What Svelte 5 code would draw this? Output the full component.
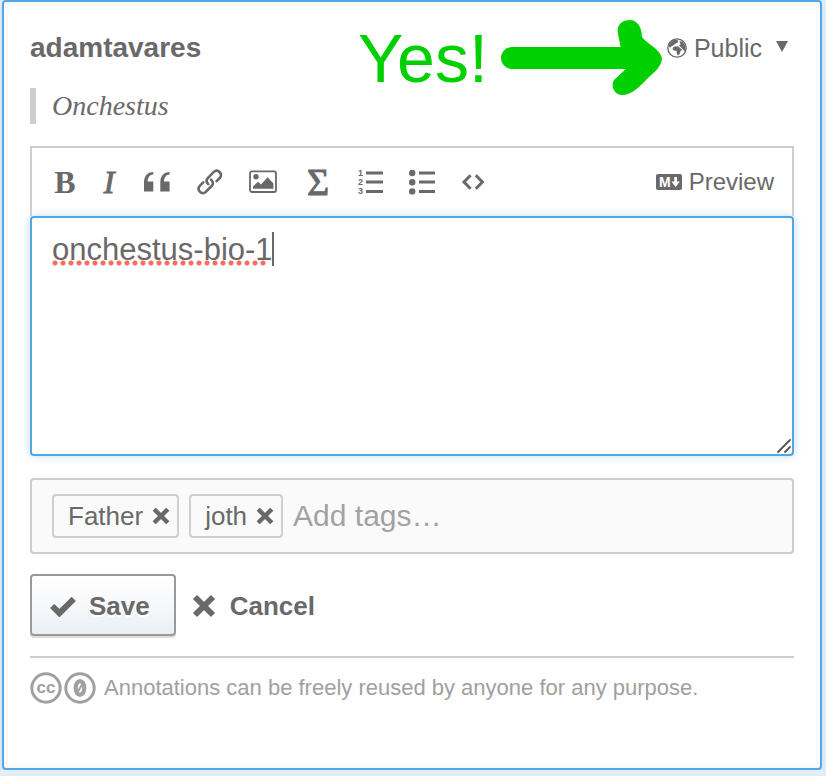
<script>
  let body = $state('onchestus-bio-1');
  let tags = $state(['Father', 'joth']);
  let draft = $state('');

  function removeTag(name) {
    tags = tags.filter((t) => t !== name);
  }
</script>

<main class="card">
  <header class="head">
    <strong class="user">adamtavares</strong>
    <button class="plain privacy" type="button">
      <svg width="20" height="20" viewBox="0 0 20 20" aria-hidden="true">
        <circle cx="10" cy="10" r="9.2" fill="none" stroke="currentColor" stroke-width="1.3" />
        <path d="M2 6.6 4.4 3.2 8 1.6 11.4 2.4 10.6 4.4 8.6 5.4 6.6 7.2 4.8 8 3.4 9.4 2 9Z" fill="currentColor" />
        <path d="M6 9.4 8.4 8.2 11.4 8.6 13.6 10.6 15 11.4 13.4 13.6 12.4 16.4 10.8 17.6 9.8 15.4 9.6 13 7 12.6 5.6 11.2Z" fill="currentColor" />
        <path d="M12.2 3.2 15.6 3.8 18.2 7.6 18.6 11 17.4 13.4 16 11.2 14.2 9.4 12 7.6 13.6 6.2Z" fill="currentColor" />
      </svg>
      <span>Public</span>
      <svg class="caret" width="12" height="12" viewBox="0 0 12 12" aria-hidden="true"><path d="M0 0H12L6 11Z" fill="currentColor" /></svg>
    </button>
  </header>

  <blockquote class="quote">Onchestus</blockquote>

  <section class="editor">
    <div class="toolbar">
      <button class="plain letter bold" type="button" aria-label="Bold">B</button>
      <button class="plain letter italic" type="button" aria-label="Italic">I</button>
      <button class="plain" type="button" aria-label="Quote">
        <svg width="28" height="26" viewBox="0 0 28 26" fill="currentColor">
          <path d="M10.3 3V5.6C7 5.8 5 8 4.6 12.4H10.3V22.4H1V14C1 7 4.2 3.2 10.3 3Z" />
          <path d="M26.6 3V5.6C23.3 5.8 21.3 8 20.9 12.4H26.6V22.4H17.3V14C17.3 7 20.5 3.2 26.6 3Z" />
        </svg>
      </button>
      <button class="plain" type="button" aria-label="Link">
        <svg width="26" height="26" viewBox="0 0 26 26" fill="none" stroke="currentColor" stroke-width="2.6" stroke-linecap="round" stroke-linejoin="round">
          <path d="M11.2 15.2C9 13 9.2 10.6 11 8.8L16.6 3.2C18.4 1.4 20.8 1.2 22.6 3S24.4 7.4 22.8 9L19.6 12.2" />
          <path d="M14 10.6C16.4 12.8 16.4 15.2 14.6 17L8.8 22.8C7 24.6 4.8 24.6 3 22.8S1.2 18.6 2.8 16.8L6.2 13.4" />
        </svg>
      </button>
      <button class="plain" type="button" aria-label="Image">
        <svg width="30" height="26" viewBox="0 0 30 26" fill="currentColor">
          <rect x="1" y="2.4" width="26" height="20.6" rx="2" fill="none" stroke="currentColor" stroke-width="1.8" />
          <circle cx="7" cy="7.8" r="2.7" />
          <path d="M4 19.8V17.4L9 12.8 12 15.4 18.6 8.2 24.4 14.4V19.8Z" />
        </svg>
      </button>
      <button class="plain letter sum" type="button" aria-label="Math">Σ</button>
      <button class="plain" type="button" aria-label="Numbered list">
        <svg width="26" height="26" viewBox="0 0 26 26" fill="currentColor">
          <text x="1" y="7" class="num">1</text>
          <text x="1" y="16" class="num">2</text>
          <text x="1" y="25" class="num">3</text>
          <path d="M9 2.4H26V5.4H9ZM9 11.6H26V14.6H9ZM9 21H26V24H9Z" />
        </svg>
      </button>
      <button class="plain" type="button" aria-label="Bulleted list">
        <svg width="26" height="26" viewBox="0 0 26 26" fill="currentColor">
          <circle cx="3.2" cy="4" r="3.2" /><circle cx="3.2" cy="13.2" r="3.2" /><circle cx="3.2" cy="22.4" r="3.2" />
          <path d="M10 2.4H26V5.4H10ZM10 11.6H26V14.6H10ZM10 21H26V24H10Z" />
        </svg>
      </button>
      <button class="plain" type="button" aria-label="Code">
        <svg width="24" height="26" viewBox="0 0 24 26" fill="none" stroke="currentColor" stroke-width="3">
          <path d="M9.6 6.2 3 13 9.6 19.8M14.8 6.2 21.4 13 14.8 19.8" />
        </svg>
      </button>
      <button class="plain preview" type="button">
        <svg width="26" height="16" viewBox="0 0 26 16" aria-hidden="true">
          <rect width="26" height="16" rx="2" fill="currentColor" />
          <text x="3" y="13" class="md">M</text>
          <path d="M18.2 3H21V7.6H23.8L19.6 13 15.4 7.6H18.2Z" fill="#fff" />
        </svg>
        <span>Preview</span>
      </button>
    </div>
    <div class="field">
      <textarea aria-label="Annotation" spellcheck="false" bind:value={body}></textarea>
      <span class="misspelt" aria-hidden="true"></span>
      <span class="cursor" aria-hidden="true"></span>
      <svg class="grip" width="14" height="14" viewBox="0 0 14 14" stroke="#555" stroke-width="1.8" stroke-linecap="round" aria-hidden="true">
        <path d="M1 13 13 1M8 13 13 8" />
      </svg>
    </div>
  </section>

  <section class="tags">
    {#each tags as tag (tag)}
      <span class="tag">
        {tag}
        <button class="plain" type="button" aria-label="Remove {tag}" onclick={() => removeTag(tag)}>
          <svg width="18" height="18" viewBox="0 0 18 18" stroke="currentColor" stroke-width="4.4"><path d="M2.2 2.2 15.8 15.8M15.8 2.2 2.2 15.8" /></svg>
        </button>
      </span>
    {/each}
    <input type="text" aria-label="Add tags" placeholder="Add tags…" bind:value={draft} />
  </section>

  <div class="actions">
    <button class="save" type="button">
      <svg width="26" height="22" viewBox="0 0 26 22" aria-hidden="true"><path d="M2.2 11 9.4 18.2 23.8 3.8" fill="none" stroke="currentColor" stroke-width="6" /></svg>
      <span>Save</span>
    </button>
    <button class="plain cancel" type="button">
      <svg width="24" height="24" viewBox="0 0 24 24" stroke="currentColor" stroke-width="6" aria-hidden="true"><path d="M3 3 21 21M21 3 3 21" /></svg>
      <span>Cancel</span>
    </button>
  </div>

  <footer class="license">
    <svg width="66" height="32" viewBox="0 0 66 32" aria-hidden="true">
      <g fill="none" stroke="currentColor" stroke-width="3">
        <circle cx="16" cy="16" r="14.2" />
        <circle cx="50" cy="16" r="14.2" />
      </g>
      <text x="16" y="21" class="cc">cc</text>
      <ellipse cx="50" cy="16" rx="4.3" ry="6.8" fill="none" stroke="currentColor" stroke-width="4.2" />
      <path d="M47.4 20.5 52.6 11.5" stroke="currentColor" stroke-width="2" />
    </svg>
    <span>Annotations can be freely reused by anyone for any purpose.</span>
  </footer>

  <span class="shout">Yes!</span>
  <svg class="arrow" width="168" height="84" viewBox="0 0 168 84" aria-hidden="true">
    <path d="M15 42H130" stroke="#00d000" stroke-width="22" stroke-linecap="round" />
    <path d="M121 18C119 8 126 4 133 4S145 11 145 21C150 28 164 33 165 43C164 52 155 58 150 63C143 70 136 78 127 79C118 80 113 71 117 64L130 52 124 33Z" fill="#00d000" />
  </svg>
</main>

<style>
  :global(body) {
    background: #e3eef8;
  }
  .card {
    position: relative;
    box-sizing: border-box;
    margin: 0 4px 0 2px;
    padding: 26px 26px 64px;
    border: 2px solid #51a7e8;
    border-radius: 4px;
    background: #fff;
    box-shadow: inset 0 0 0 4px #fafafa, 0 2px 6px #c8dcee;
    color: #696969;
    font-family: "Liberation Sans", Arial, sans-serif;
    font-size: 26px;
  }
  button,
  input,
  textarea {
    font: inherit;
    color: inherit;
  }
  svg {
    display: block;
    flex: none;
  }
  .plain {
    display: flex;
    align-items: center;
    padding: 0;
    border: 0;
    background: none;
  }
  .head {
    display: flex;
    align-items: center;
    justify-content: space-between;
    height: 40px;
  }
  .user {
    font-size: 28px;
  }
  .privacy {
    gap: 7px;
    padding-right: 6px;
    font-size: 25px;
  }
  .caret {
    margin: 0 0 3px 7px;
  }
  .quote {
    margin: 20px 0 22px;
    padding-left: 16px;
    border-left: 6px solid #cecece;
    font: italic 28px/36px "Liberation Serif", Georgia, serif;
  }
  .toolbar {
    display: flex;
    align-items: center;
    gap: 26px;
    height: 68px;
    padding: 0 18px 0 23px;
    border: 2px solid #cecece;
    border-bottom: 0;
    box-sizing: border-box;
    height: 70px;
  }
  .letter {
    justify-content: center;
    width: 20px;
    font: bold 32px/32px "Liberation Serif", serif;
  }
  .italic {
    width: 16px;
    font-style: italic;
    font-weight: normal;
    -webkit-text-stroke: 1px currentColor;
  }
  .sum {
    width: 26px;
    font-size: 38px;
    font-weight: normal;
    -webkit-text-stroke: 1px currentColor;
  }
  .num {
    font: bold 9px "Liberation Sans", sans-serif;
  }
  .md {
    font: bold 14px "Liberation Sans", sans-serif;
    fill: #fff;
  }
  .preview {
    gap: 7px;
    margin-left: auto;
    font-size: 24px;
  }
  .field {
    position: relative;
  }
  textarea {
    display: block;
    box-sizing: border-box;
    width: 100%;
    height: 240px;
    padding: 14px 20px;
    border: 2px solid #51a7e8;
    border-radius: 4px;
    outline: 0;
    background: #fff;
    box-shadow: 0 0 10px #c4dcf0;
    font-size: 31px;
    line-height: 36px;
    resize: none;
  }
  .misspelt {
    position: absolute;
    left: 22px;
    top: 44px;
    width: 216px;
    height: 6px;
    background: radial-gradient(circle at 3px 3px, #ff6a5c 2px, transparent 3px) 0 0 / 8px 6px;
  }
  .cursor {
    position: absolute;
    left: 242px;
    top: 16px;
    width: 2px;
    height: 34px;
    background: #696969;
  }
  .grip {
    position: absolute;
    right: 3px;
    bottom: 3px;
  }
  .tags {
    display: flex;
    align-items: center;
    box-sizing: border-box;
    gap: 10px;
    height: 76px;
    margin-top: 22px;
    padding: 0 20px;
    border: 2px solid #cecece;
    border-radius: 4px;
    background: #fafafa;
  }
  .tag {
    display: flex;
    align-items: center;
    gap: 9px;
    height: 40px;
    padding: 0 7px 0 14px;
    border: 2px solid #cecece;
    border-radius: 4px;
  }
  .tags input {
    flex: 1;
    min-width: 0;
    padding: 0;
    border: 0;
    outline: 0;
    background: none;
    font-size: 30px;
  }
  .tags input::placeholder {
    color: #a2a2a2;
    opacity: 1;
  }
  .actions {
    display: flex;
    align-items: center;
    gap: 16px;
    margin: 20px 0;
    font-weight: bold;
  }
  .save {
    display: flex;
    align-items: center;
    box-sizing: border-box;
    gap: 13px;
    height: 62px;
    padding: 2px 24px 0 18px;
    border: 2px solid #999;
    border-radius: 4px;
    background: linear-gradient(#fff, #f7f8fa 50%, #e9eff5);
    box-shadow: 0 2px 0 #dedede;
    text-shadow: 0 2px 0 #fff;
  }
  .cancel {
    gap: 14px;
    padding-top: 2px;
  }
  .license {
    display: flex;
    align-items: center;
    gap: 8px;
    padding-top: 14px;
    border-top: 2px solid #cecece;
    color: #a0a0a0;
    font-size: 22px;
    line-height: 32px;
  }
  .cc {
    font: bold 17px "Liberation Sans", sans-serif;
    fill: currentColor;
    text-anchor: middle;
  }
  .shout {
    position: absolute;
    left: 354px;
    top: 18px;
    color: #00d000;
    font-size: 68px;
    line-height: 76px;
  }
  .arrow {
    position: absolute;
    left: 493px;
    top: 14px;
  }
</style>
